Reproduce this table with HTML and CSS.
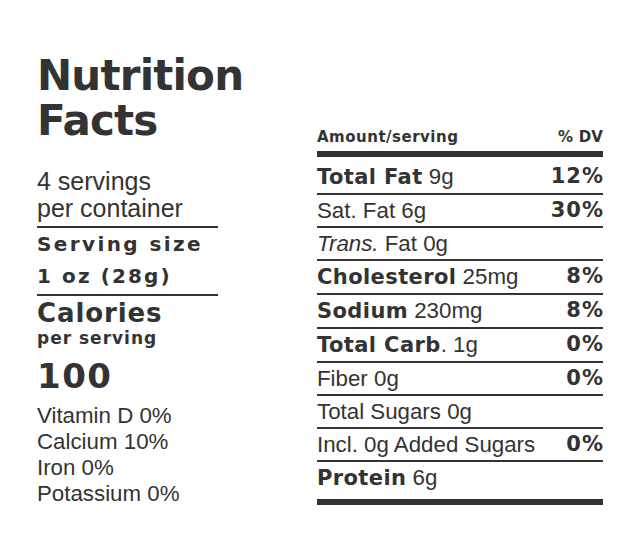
FILE: index.html
```html
<!DOCTYPE html>
<html lang="en">
<head>
<meta charset="utf-8">
<title>Nutrition Facts</title>
<link rel="stylesheet" href="styles.css">
</head>
<body>
<main class="label">
  <section class="summary">
    <h1 class="title">Nutrition<br>Facts</h1>
    <div class="servings">4 servings<br>per container</div>
    <div class="size">
      <div class="size-label">Serving size</div>
      <div class="size-value">1 oz (28g)</div>
    </div>
    <div class="calories">
      <div class="cal-label">Calories</div>
      <div class="cal-sub">per serving</div>
      <div class="cal-value">100</div>
    </div>
    <ul class="vitamins">
      <li>Vitamin D 0%</li>
      <li>Calcium 10%</li>
      <li>Iron 0%</li>
      <li>Potassium 0%</li>
    </ul>
  </section>
  <section class="table">
    <div class="head">
      <span>Amount/serving</span>
      <span>% DV</span>
    </div>
    <div class="row first"><span><b>Total Fat</b> 9g</span><b class="dv">12%</b></div>
    <div class="row"><span>Sat. Fat 6g</span><b class="dv">30%</b></div>
    <div class="row"><span><i>Trans.</i> Fat 0g</span></div>
    <div class="row"><span><b>Cholesterol</b> 25mg</span><b class="dv">8%</b></div>
    <div class="row"><span><b>Sodium</b> 230mg</span><b class="dv">8%</b></div>
    <div class="row"><span><b>Total Carb</b>. 1g</span><b class="dv">0%</b></div>
    <div class="row"><span>Fiber 0g</span><b class="dv">0%</b></div>
    <div class="row"><span>Total Sugars 0g</span></div>
    <div class="row"><span>Incl. 0g Added Sugars</span><b class="dv">0%</b></div>
    <div class="row last"><span><b>Protein</b> 6g</span></div>
  </section>
</main>
</body>
</html>
```

FILE: styles.css
```css
html, body {
  margin: 0;
  padding: 0;
  background: #ffffff;
}

body {
  font-family: "Liberation Sans", Arial, sans-serif;
  color: #333333;
}

.label {
  display: flex;
  justify-content: space-between;
  align-items: flex-start;
  padding: 53px 38px 0 37px;
}

.summary {
  width: 181px;
}

.title,
.size,
.calories,
.head,
.table b {
  font-family: "DejaVu Sans", "Liberation Sans", sans-serif;
  font-weight: 700;
}

.title {
  margin: 0;
  font-size: 42px;
  line-height: 45px;
  letter-spacing: -0.8px;
}

.servings {
  margin-top: 25px;
  font-size: 25px;
  line-height: 27px;
  padding-bottom: 4px;
  border-bottom: 2px solid #333333;
}

.size {
  padding-bottom: 2px;
  font-size: 20px;
  line-height: 32px;
  border-bottom: 2px solid #333333;
}

.size-label {
  letter-spacing: 2.4px;
}

.size-value {
  letter-spacing: 2.1px;
}

.calories {
  padding-top: 3px;
}

.cal-label {
  font-size: 26px;
  line-height: 28px;
  letter-spacing: 0.9px;
}

.cal-sub {
  margin-top: 1px;
  font-size: 17px;
  line-height: 20px;
  letter-spacing: 1px;
}

.cal-value {
  margin-top: 8px;
  font-size: 34px;
  line-height: 40px;
  letter-spacing: 1.5px;
}

.vitamins {
  list-style: none;
  margin: 7px 0 0;
  padding: 0;
  font-size: 22.3px;
  line-height: 26px;
}

.table {
  width: 286px;
  margin-top: 74px;
}

.head {
  display: flex;
  justify-content: space-between;
  font-size: 15px;
  line-height: 20px;
  letter-spacing: 0.5px;
  padding-bottom: 4px;
  border-bottom: 6px solid #333333;
}

.head span:last-child {
  letter-spacing: 0.2px;
  margin-right: -0.2px;
}

.row {
  display: flex;
  justify-content: space-between;
  font-size: 22.3px;
  line-height: 31px;
  border-bottom: 2px solid #333333;
}

.row b {
  font-size: 21px;
  letter-spacing: 0.4px;
}

.row .dv {
  letter-spacing: 1px;
  margin-right: -1px;
}

.row.first {
  padding-top: 4px;
}

.row.last {
  padding-bottom: 5px;
  border-bottom: 6px solid #333333;
}
```
